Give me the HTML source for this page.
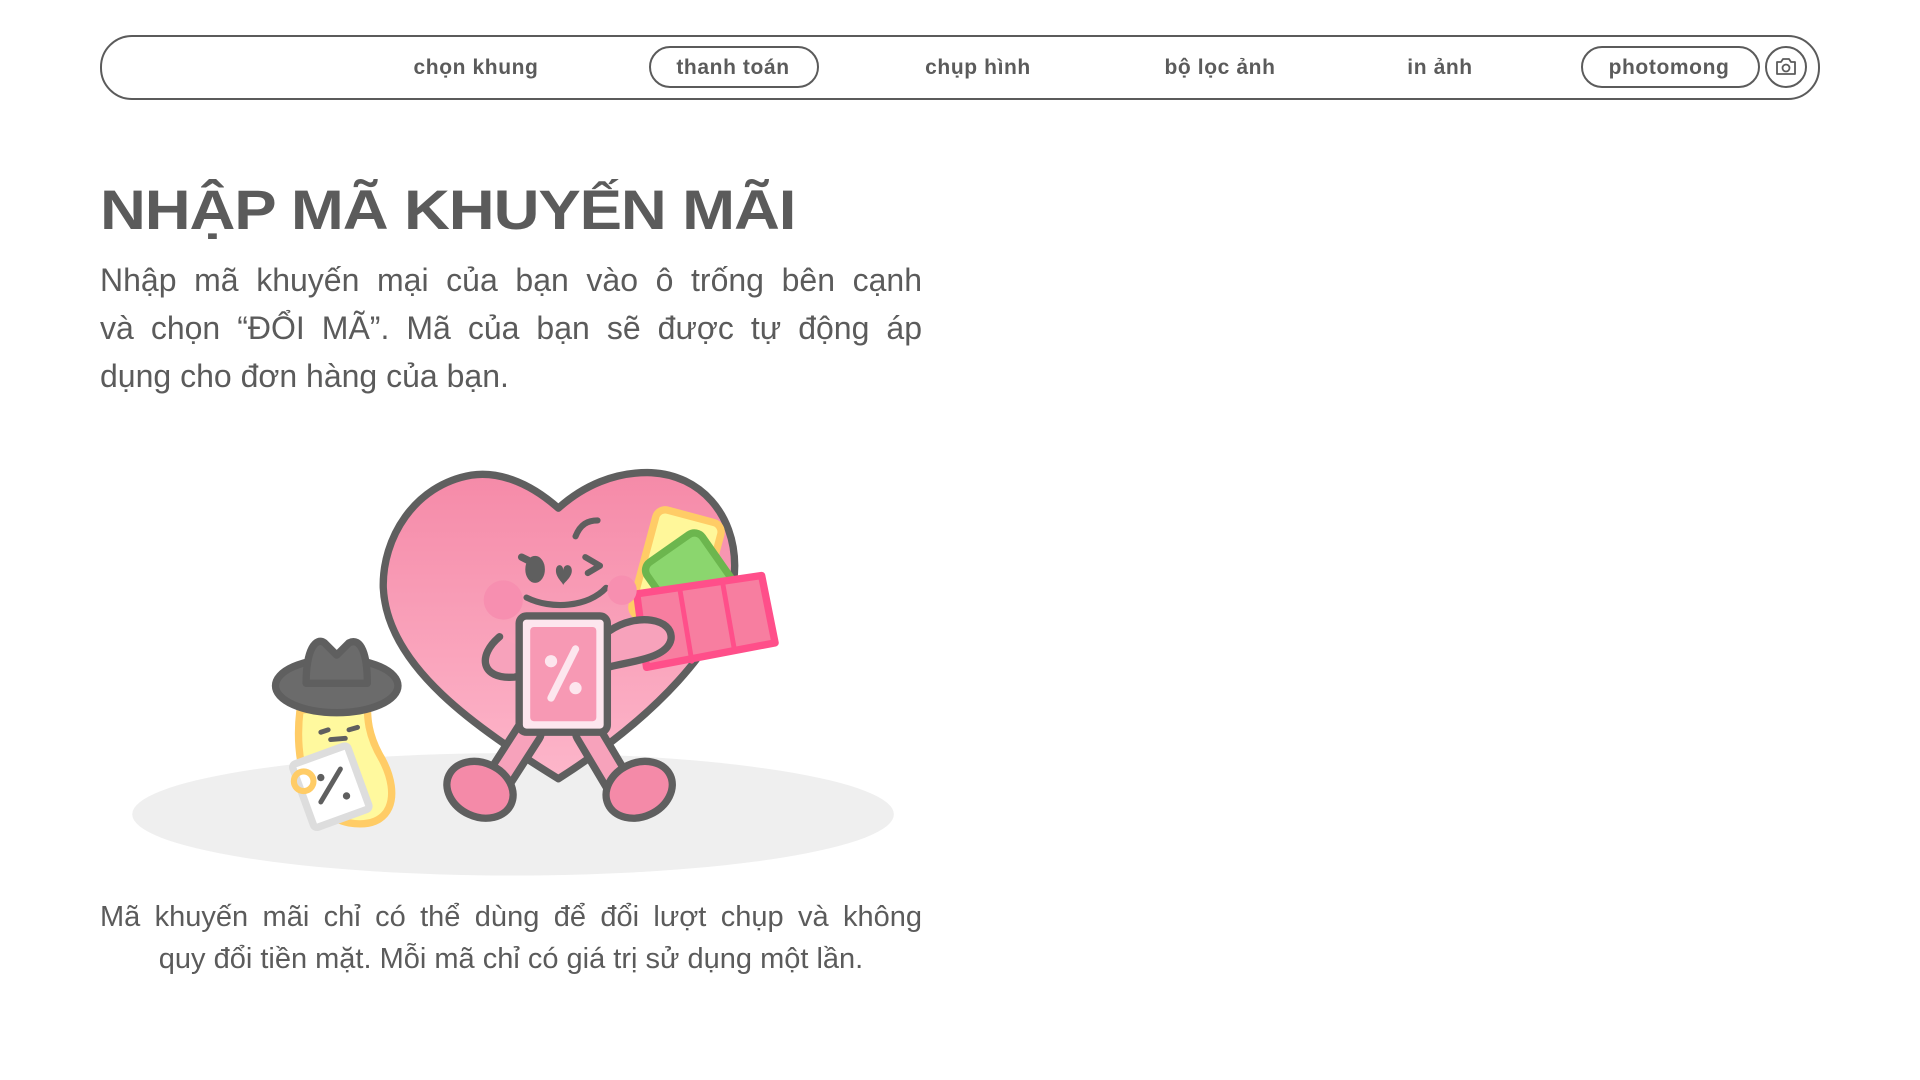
<!DOCTYPE html>
<html><head><meta charset="utf-8"><style>
html,body{margin:0;padding:0;background:#fff;width:1920px;height:1080px;overflow:hidden;font-family:"Liberation Sans","DejaVu Sans",sans-serif;color:#5b5b5b}
.nav{position:absolute;left:100px;top:35px;width:1716px;height:61px;border:2px solid #5b5b5b;border-radius:32px}
.ni{position:absolute;top:68px;transform:translate(-50%,-50%);font-weight:bold;font-size:21px;color:#5b5b5b;white-space:nowrap;letter-spacing:0.6px}
.pill{position:absolute;border:2px solid #5b5b5b;border-radius:22px;height:38px;top:46px}
h1{position:absolute;left:100px;top:177px;margin:0;font-size:56px;font-weight:900;letter-spacing:-1px;color:#5b5b5b;white-space:nowrap;transform:scaleX(1.135);transform-origin:left}
.p{position:absolute;left:100px;width:822px;font-size:32px;color:#5b5b5b}
.j{text-align:justify;text-align-last:justify;white-space:nowrap}
.b{position:absolute;left:100px;width:822px;font-size:29px;color:#5b5b5b}
</style></head><body>
<div class="nav"></div>
<div class="pill" style="left:649px;width:166px"></div>
<div class="pill" style="left:1581px;width:175px"></div>
<div style="position:absolute;left:1765px;top:46px;width:38px;height:38px;border:2px solid #5b5b5b;border-radius:50%"></div>
<svg style="position:absolute;left:1774px;top:56px" width="24" height="22" viewBox="0 0 24 22"><path d="M3 6h4l2-3h6l2 3h4v12H3z" fill="none" stroke="#5b5b5b" stroke-width="1.8" stroke-linejoin="round"/><circle cx="12" cy="12" r="3.5" fill="none" stroke="#5b5b5b" stroke-width="1.8"/></svg>
<div class="ni" style="left:476px">chọn khung</div>
<div class="ni" style="left:733px">thanh toán</div>
<div class="ni" style="left:978px">chụp hình</div>
<div class="ni" style="left:1220px">bộ lọc ảnh</div>
<div class="ni" style="left:1440px">in ảnh</div>
<div class="ni" style="left:1669px">photomong</div>

<h1>NHẬP MÃ KHUYẾN MÃI</h1>
<div class="p j" style="top:262px">Nhập mã khuyến mại của bạn vào ô trống bên cạnh</div>
<div class="p j" style="top:310px">và chọn “ĐỔI MÃ”. Mã của bạn sẽ được tự động áp</div>
<div class="p" style="top:358px">dụng cho đơn hàng của bạn.</div>

<svg style="position:absolute;left:0;top:0" width="1920" height="1080" viewBox="0 0 1568 882">
<defs><linearGradient id="hg" x1="0" y1="0" x2="0" y2="1"><stop offset="0" stop-color="#f58aa8"/><stop offset="1" stop-color="#fdb6ca"/></linearGradient></defs>
<ellipse cx="419" cy="665" rx="311" ry="50" fill="#efefef"/>
<g stroke="#5f5f5f" stroke-width="6" stroke-linejoin="round" stroke-linecap="round">
<path d="M456,415 C430,392 405,385 385,388 C338,396 312,440 313,480 C316,545 390,595 456,636 C525,592 600,525 600,462 C600,420 572,388 532,386 C502,385 476,397 456,415Z" fill="url(#hg)"/>
<path d="M432,598 L405,640 M480,598 L505,640" stroke-width="26" stroke="#5f5f5f"/>
<path d="M432,598 L405,640 M480,598 L505,640" stroke-width="14" stroke="#f7a2bb"/>
<ellipse cx="392" cy="645" rx="28" ry="22" fill="#f48aa8" transform="rotate(25 392 645)"/>
<ellipse cx="522" cy="645" rx="28" ry="22" fill="#f48aa8" transform="rotate(-25 522 645)"/>
<rect x="525" y="420" width="55" height="90" rx="8" fill="#fff79a" stroke="#ffcc66" transform="rotate(15 552 465)"/>
<rect x="545" y="440" width="55" height="90" rx="8" fill="#8bd66e" stroke="#6cb64e" transform="rotate(-35 572 485)"/>
<path d="M520,485 L622,470 L633,525 L528,545Z" fill="#f77ea0" stroke="#ff4f8a"/>
<path d="M555,480 L565,540 M590,475 L600,532" stroke="#ff4f8a" stroke-width="4"/>
<path d="M498,515 C520,500 550,505 548,522 C545,538 515,540 496,545" fill="#f7a2bb"/>
<path d="M408,520 C390,535 392,555 420,553 C430,552 440,545 440,535" fill="#f7a2bb"/>
<rect x="424" y="503" width="72" height="95" rx="6" fill="#fde6ee"/>
<rect x="433" y="512" width="54" height="77" rx="3" fill="#f799b4" stroke="none"/>
<ellipse cx="437" cy="465" rx="7" ry="10" fill="#5f5f5f" stroke-width="2"/>
<path d="M426,455 L432,458" />
<path d="M478,455 L490,462 L480,468" fill="none" stroke-width="5"/>
<path d="M470,438 C474,428 480,425 488,425" fill="none" stroke-width="5"/>
<path d="M430,488 C450,498 480,496 495,480" fill="none" stroke-width="5"/>
<path d="M245,580 C240,620 250,665 285,672 C320,678 328,650 312,620 C300,600 300,585 300,575Z" fill="#fff99e" stroke="#ffcc66"/>
<rect x="246" y="615" width="48" height="55" rx="3" fill="#fff" stroke="#dddddd" transform="rotate(-20 270 642)"/>
<circle cx="248" cy="638" r="8" fill="none" stroke="#ffcc66" stroke-width="5"/>
<ellipse cx="275" cy="560" rx="50" ry="22" fill="#6b6b6b"/>
<path d="M250,558 C250,530 258,520 265,525 L275,535 L285,525 C295,520 300,535 300,558Z" fill="#6b6b6b"/>
<path d="M262,598 L268,596 M285,596 L292,594 M270,604 L282,603" stroke-width="4"/>
</g>
<circle cx="411" cy="490" r="16" fill="#f78fb0"/>
<circle cx="508" cy="482" r="12" fill="#f78fb0"/>
<path d="M454,466 C454,460 460,460 460,466 C460,460 467,460 467,466 C467,472 460,476 460,478 C460,476 454,472 454,466Z" fill="#5f5f5f"/>
<path d="M450,570 L470,530" stroke="#fde6ee" stroke-width="6" stroke-linecap="round"/>
<circle cx="450" cy="540" r="5" fill="#fde6ee"/><circle cx="470" cy="562" r="5" fill="#fde6ee"/>
<path d="M262,655 L278,628" stroke="#5f5f5f" stroke-width="4" stroke-linecap="round"/>
<circle cx="283" cy="650" r="3" fill="#5f5f5f"/><circle cx="262" cy="635" r="3" fill="#5f5f5f"/>
</svg>

<div class="b j" style="top:901px">Mã khuyến mãi chỉ có thể dùng để đổi lượt chụp và không</div>
<div class="b" style="top:943px;text-align:center">quy đổi tiền mặt. Mỗi mã chỉ có giá trị sử dụng một lần.</div>
</body></html>
